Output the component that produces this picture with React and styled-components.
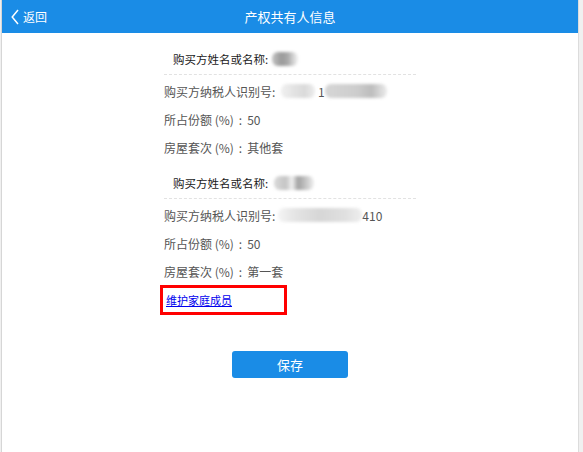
import React from 'react';
import styled, { createGlobalStyle } from 'styled-components';

const GlobalStyle = createGlobalStyle`
  html, body {
    margin: 0;
    padding: 0;
    background: #f0f0f0;
  }
  body {
    font-family: "Microsoft YaHei", "Noto Sans CJK SC", "Liberation Sans", sans-serif;
  }
`

const Page = styled.div`
  width: 576px;
  height: 452px;
  margin-left: 1px;
  background: #fff;
  border-left: 1px solid #d6d6d6;
  border-right: 1px solid #dcdcdc;
  display: flex;
  flex-direction: column;
`
const Header = styled.div`
  position: relative;
  height: 33px;
  background: #1a8ce6;
  display: flex;
  align-items: center;
  justify-content: center;
  color: #fff;
`
const Back = styled.div`
  position: absolute;
  left: 9px;
  top: 0;
  height: 33px;
  display: flex;
  align-items: center;
  gap: 4px;
  font-size: 12px;
`
const Title = styled.div`
  font-size: 13px;
`
const Content = styled.div`
  width: 252px;
  margin: 11px auto 0;
  display: flex;
  flex-direction: column;
`
const Group = styled.div`
  margin-top: ${p => p.$first ? 0 : 7}px;
`
const NameRow = styled.div`
  height: 30px;
  padding-left: 9px;
  display: flex;
  align-items: center;
  font-size: 11.5px;
  color: #1a1a1a;
  border-bottom: 1px dashed #e2e2e2;
`
const InfoList = styled.div`
  margin-top: 2px;
`
const InfoRow = styled.div`
  height: 28px;
  display: flex;
  align-items: center;
  font-size: 12px;
  color: #555;
  white-space: pre;
`
const Sep = styled.span`
  margin: 0 5px;
`
const Mask = styled.span`
  display: inline-block;
  width: ${p => p.$w}px;
  height: 14px;
  margin-left: ${p => p.$ml || 0}px;
  border-radius: 6px;
  background: ${p => p.$bg};
  filter: blur(1.5px);
`
const LinkBox = styled.div`
  width: 118px;
  height: 24px;
  margin-left: -4px;
  border: 3px solid #ff0000;
  display: flex;
  align-items: center;
  padding-left: 3px;
`
const Link = styled.a`
  font-size: 11px;
  color: #0000ee;
  text-decoration: underline;
`
const SaveButton = styled.button`
  align-self: center;
  margin-top: 36px;
  width: 116px;
  height: 27px;
  border: none;
  border-radius: 3px;
  background: #1a8ce6;
  color: #fff;
  font-family: inherit;
  font-size: 13px;
`

const Chevron = () => (
  <svg width="8" height="16" viewBox="0 0 8 16">
    <path d="M7 1 L1.2 8 L7 15" fill="none" stroke="#fff" strokeWidth="1.5" />
  </svg>
)

const owners = [
  {
    name: <Mask $w={26} $ml={4} $bg="linear-gradient(90deg,#c4c4c4,#9a9a9a 35%,#a8a8a8 60%,#d0d0d0 80%,#f2f2f2)" />,
    tax: <><Mask $w={34} $ml={6} $bg="linear-gradient(90deg,#f0f0f0,#e2e2e2 40%,#dadada 70%,#eee)" /><span> 1</span><Mask $w={62} $bg="linear-gradient(90deg,#d6d6d6,#cdcdcd 50%,#bdbdbd 75%,#ececec)" /></>,
    share: '50',
    house: '其他套',
  },
  {
    name: <Mask $w={40} $ml={6} $bg="linear-gradient(90deg,#dadada,#c4c4c4 30%,#f2f2f2 45%,#a2a2a2 60%,#bcbcbc 75%,#f0f0f0)" />,
    tax: <><Mask $w={84} $ml={3} $bg="linear-gradient(90deg,#f4f4f4,#e4e4e4 20%,#d6d6d6 50%,#e0e0e0 80%,#eeeeee)" /><span>410</span></>,
    share: '50',
    house: '第一套',
  },
]

const App = () => {
  return (
    <Page>
      <GlobalStyle />
      <Header>
        <Back><Chevron />返回</Back>
        <Title>产权共有人信息</Title>
      </Header>
      <Content>
        {owners.map((o, i) => (
          <Group key={i} $first={i === 0}>
            <NameRow>购买方姓名或名称:{o.name}</NameRow>
            <InfoList>
              <InfoRow>购买方纳税人识别号:{o.tax}</InfoRow>
              <InfoRow>所占份额 (%)<Sep>:</Sep>{o.share}</InfoRow>
              <InfoRow>房屋套次 (%)<Sep>:</Sep>{o.house}</InfoRow>
            </InfoList>
          </Group>
        ))}
        <LinkBox><Link href="#">维护家庭成员</Link></LinkBox>
        <SaveButton>保存</SaveButton>
      </Content>
    </Page>
  );
}

export default App;
